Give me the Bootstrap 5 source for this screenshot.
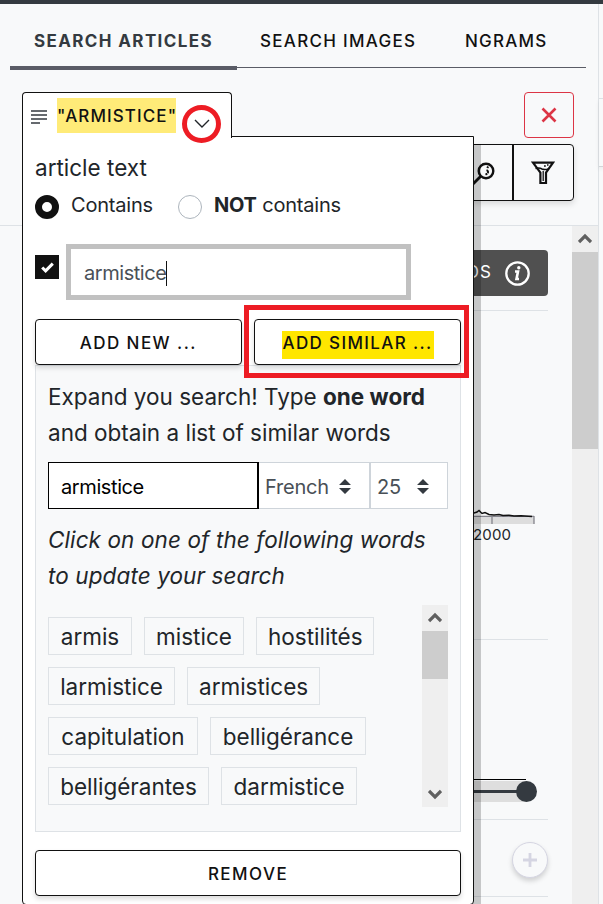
<!DOCTYPE html>
<html lang="en">
<head>
<meta charset="utf-8">
<meta name="viewport" content="width=device-width, initial-scale=1">
<title>Search articles</title>
<link href="https://cdn.jsdelivr.net/npm/bootstrap@5.3.0/dist/css/bootstrap.min.css" rel="stylesheet">
<style>
body{font-family:Inter,"Liberation Sans",sans-serif;background:#f8f9fa;color:#212529;width:603px;height:904px;overflow:hidden}
svg{flex:none}
.app-shell{height:904px;border-top:4px solid #343a40;overflow:hidden}
.side-pane{width:599px;border-right:1px solid #dee2e6;flex:none}
.next-pane{width:4px}
.next-pane .head-a{height:95px;border-bottom:1px solid #dee2e6}
.next-pane .head-b{height:68px;border-bottom:1px solid #d2d5d8;box-shadow:0 2px 4px rgba(0,0,0,.08)}
.caps{font-size:17px;font-weight:500;letter-spacing:1.45px;color:#111;line-height:24px;white-space:nowrap}
.tabs-bar{margin:0 12px 0 10px;height:64px;border-bottom:1px solid #5a5c66}
.tab-item{padding:25px 24px 0;height:66px}
.tab-item.is-on{border-bottom:4px solid #5a5c66;color:#343a40;font-weight:700;width:227px;letter-spacing:1.38px}
.tab-two{width:204px;letter-spacing:1.3px;padding-left:23px}
.tab-three{letter-spacing:1.2px}
.filter-row{height:158px;border-bottom:1px solid #dee2e6}
.btn-close-x{width:50px;height:46px;border:1px solid #dc3545;border-radius:4px;margin:24px 24px 6px auto}
.tool-group{width:122px;height:57px;margin:0 24px 0 auto;border:1px solid #111;border-radius:4px;box-shadow:0 3px 6px rgba(0,0,0,.13)}
.tool-group>div{width:60px}
.tool-group>div:first-child{border-right:2px solid #111;width:61px;padding-left:3px}
.bar-track{width:26px;background:#efefef}
.bar-btn{height:26px;padding-bottom:2px}
.thumb-tall{height:197px;background:#cdcdcd}
.thumb-short{height:48px;background:#cdcdcd}
.content-col{width:548px;height:678px;padding-left:22px}
.blk{border-bottom:1px solid #dee2e6}
.blk-count{height:85px}
.blk-axis{height:329px}
.blk-range{height:180px}
.blk-add{height:77px;padding-top:22px}
.dark-btn{background:#505050;color:#fff;height:46px;width:160px;border-radius:4px;padding-right:17px;gap:12px;font-size:17px;letter-spacing:1px}
.popup{position:absolute;left:22px;top:136px;width:452px;height:769px;border:1px solid #111;border-radius:0 0 4px 4px;background:#fff;padding:12px;box-shadow:7px 8px 0 rgba(0,0,0,.2)}
.tag-tab{position:absolute;left:22px;top:92px;width:210px;height:46px;border:1px solid #111;border-bottom:0;border-radius:4px 4px 0 0;background:#fff;padding-left:8px}
.ic-lines{margin-top:17px}
.ic-chevron{margin:26px 0 0 18px}
.hl-soft{background:#ffeb78;height:35px;line-height:37px;width:119px;margin:5px 0 0 10px;letter-spacing:1.1px}
.ring{position:absolute;left:182px;top:105px;width:39px;height:38px;border:5px solid #ed1c24;border-radius:50%}
.frame-red{position:absolute;left:244px;top:305px;width:225px;height:73px;border:5px solid #ed1c24}
.t24{font-size:22.5px;line-height:36px;letter-spacing:0;white-space:nowrap}
.t21{font-size:20px;line-height:30px;letter-spacing:-.2px;white-space:nowrap}
.field-name{padding-top:1px}
.mode-row{height:58px;padding-top:4px}
.mode-label{margin-left:12px}
.mode-first{width:107px}
.dot{width:24px;height:24px;margin-top:5px;border-radius:50%;border:1px solid #adb5bd;background:#fff;flex:none}
.dot.on{border:7.5px solid #111}
.tick{width:24px;height:24px;background:#111;margin:11px 7px 0 0}
.term-in{width:345px;height:56px;border:5px solid #c1c1c1;background:#fff;padding:2px 0 0 13px;color:#495057;letter-spacing:-.45px}
.caret{width:1px;height:25px;background:#111}
.action-row{gap:12px;margin-top:19px}
.btn-line{height:46px;border:1px solid #111;border-radius:4px;background:#fff;box-shadow:0 3px 5px rgba(0,0,0,.14);padding-top:2px}
.btn-similar{padding-left:27px}
.btn-remove{margin-top:18px}
.hl{background:#ffe600;height:28px;line-height:24px;width:152px;padding-left:1px;margin-top:4px;letter-spacing:1.35px}
.similar{background:#f8f9fa;border:1px solid #dee2e6;height:467px;padding:13px 12px 0}
.inputs-row{margin-top:11px}
.box-in{height:47px;border:1px solid #ced4da;background:#fff;color:#495057;padding:2px 0 0 6px}
.box-in.word{width:211px;border-color:#000;border-right-width:2px;color:#000;padding-left:12px;letter-spacing:-.4px}
.box-lang{width:111px}
.box-lang span{width:73px}
.box-num{width:78px}
.box-num span{width:39px}
.hint{margin-top:13px;letter-spacing:.1px}
.list-scroll{height:202px;margin-top:11px}
.chips{gap:12px;padding-top:12px}
.chip-row{gap:12px}
.chip{height:38px;border:1px solid #dee2e6;line-height:37px;padding:0 11px;text-align:center}
.w-84{width:84px}.w-100x{width:100px}.w-118{width:118px}.w-127{width:127px}.w-133{width:133px}.w-150{width:150px}.w-156{width:156px}.w-161{width:161px}.w-136{width:136px}
.plus{width:36px;height:36px;border:1px solid #d5d5e2;border-radius:50%;box-shadow:0 3px 5px rgba(0,0,0,.16);background:#f8f9fa}
</style>
</head>
<body>
<div class="app-shell d-flex position-relative">
  <div class="side-pane">
    <nav class="tabs-bar d-flex">
      <div class="caps tab-item is-on">SEARCH ARTICLES</div>
      <div class="caps tab-item tab-two">SEARCH IMAGES</div>
      <div class="caps tab-item tab-three">NGRAMS</div>
    </nav>
    <div class="filter-row">
      <div class="d-flex"><div class="btn-close-x d-flex align-items-center justify-content-center">
        <svg width="16" height="16" viewBox="0 0 16 16"><path d="M1.5 1.5l13 13M14.5 1.5l-13 13" stroke="#dc3545" stroke-width="2.6"/></svg></div></div>
      <div class="tool-group d-flex">
        <div class="d-flex align-items-center justify-content-center">
          <svg width="26" height="26" viewBox="0 0 26 26" fill="none" stroke="#111"><circle cx="15" cy="11" r="7.3" stroke-width="2.4"/><path d="M9.5 16.5l-8 8" stroke-width="2.8"/><path d="M15.8 6.8l1.8 1M15.5 10.2q2 .6 1.5 3M14.5 14.6l1.8-1" stroke-width="1.8"/></svg>
        </div>
        <div class="d-flex align-items-center justify-content-center">
          <svg width="24" height="24" viewBox="0 0 24 24" fill="none" stroke="#111" stroke-width="2.2"><path d="M2 1.6h20L15 11.5V22H9.400V11.500z"/><path d="M4.500 7.400q4-1 6.500.6 3 1.200 7-.4" stroke-width="1.500"/><path d="M13 5h1.800M16 4h1.500M12.200 10v10" stroke-width="1.300"/></svg>
        </div>
      </div>
    </div>
    <div class="d-flex justify-content-between">
      <div class="content-col">
        <div class="blk blk-count d-flex justify-content-end">
          <div class="dark-btn d-flex align-items-center justify-content-end mt-4"><span>DS</span>
            <svg width="27" height="27" viewBox="0 0 27 27" fill="none" stroke="#fff"><circle cx="13.5" cy="13.500" r="11.200" stroke-width="2.300"/><path d="M11 11.500h3l-1.500 7.500h2.500" stroke-width="2.600"/><circle cx="14.800" cy="7.800" r="1.700" fill="#fff" stroke="none"/></svg>
          </div>
        </div>
        <div class="blk blk-axis">
          <svg width="526" height="260" viewBox="22 311 526 260" fill="none"><path d="M440 518H534V524H440z" fill="#ddd"/><path d="M440 516.500H534M492 517v7M534 516v8" stroke="#84848c" stroke-width="1.300"/><path d="M470 514l4-1 3-1 2-1.500 3 3 3-1 4 2 5 .5 5-.5 4 1 6-.3 5 .8 7-.2 11 .8" stroke="#111" stroke-width="1.500"/><text x="473" y="540" font-size="15" fill="#212529" textLength="38">2000</text></svg>
        </div>
        <div class="blk blk-range">
          <svg width="526" height="179" viewBox="22 640 526 179"><path d="M440 781H526V802H440z" fill="#dedede"/><path d="M440 779.500h86" stroke="#000"/><path d="M440 791.500h86" stroke="#343a40" stroke-width="3"/><circle cx="526.500" cy="791.500" r="10.500" fill="#343a40"/></svg>
        </div>
        <div class="blk blk-add d-flex justify-content-end">
          <div class="plus d-flex align-items-center justify-content-center"><svg width="16" height="16"><path d="M8 1v14M1 8h14" stroke="#d5d5e2" stroke-width="2.800"/></svg></div>
        </div>
      </div>
      <div class="bar-track">
        <div class="bar-btn d-flex align-items-center justify-content-center"><svg width="14" height="11" viewBox="0 0 14 11"><path d="M1 9l6-6 6 6" fill="none" stroke="#606060" stroke-width="3.200"/></svg></div>
        <div class="thumb-tall"></div>
      </div>
    </div>
  </div>
  <div class="next-pane"><div class="head-a"></div><div class="head-b"></div></div>
</div>

<section class="popup">
  <div class="t24 field-name">article text</div>
  <div class="mode-row d-flex">
    <div class="dot on"></div><div class="t21 mode-label mode-first">Contains</div>
    <div class="dot"></div><div class="t21 mode-label"><b>NOT</b> contains</div>
  </div>
  <div class="d-flex">
    <div class="tick d-flex align-items-center justify-content-center"><svg width="13" height="11" viewBox="0 0 13 11"><path d="M1.200 5.500l3.400 3.400L11.800 1.600" stroke="#fff" stroke-width="3" fill="none"/></svg></div>
    <div class="t21 term-in d-flex align-items-center">armistice<span class="caret"></span></div>
  </div>
  <div class="action-row d-flex">
    <div class="btn-line w-50 caps d-flex align-items-center justify-content-center">ADD NEW ...</div>
    <div class="btn-line btn-similar w-50 caps d-flex align-items-center"><div class="hl">ADD SIMILAR ...</div></div>
  </div>
  <div class="similar">
    <div class="t24">Expand you search! Type <b>one word</b><br>and obtain a list of similar words</div>
    <div class="inputs-row d-flex">
      <div class="t21 box-in word d-flex align-items-center">armistice</div>
      <div class="t21 box-in box-lang d-flex align-items-center border-start-0"><span>French</span><svg width="14" height="18" viewBox="0 0 14 18"><path d="M7 1l6 6H1zM7 16l6-6H1z" fill="#343a40"/></svg></div>
      <div class="t21 box-in box-num d-flex align-items-center"><span>25</span><svg width="14" height="18" viewBox="0 0 14 18"><path d="M7 1l6 6H1zM7 16l6-6H1z" fill="#343a40"/></svg></div>
    </div>
    <div class="t24 fst-italic hint">Click on one of the following words<br>to update your search</div>
    <div class="list-scroll d-flex justify-content-between">
      <div class="chips d-flex flex-column">
        <div class="chip-row d-flex t24"><div class="chip w-84">armis</div><div class="chip w-100x">mistice</div><div class="chip w-118">hostilités</div></div>
        <div class="chip-row d-flex t24"><div class="chip w-127">larmistice</div><div class="chip w-133">armistices</div></div>
        <div class="chip-row d-flex t24"><div class="chip w-150">capitulation</div><div class="chip w-156">belligérance</div></div>
        <div class="chip-row d-flex t24"><div class="chip w-161">belligérantes</div><div class="chip w-136">darmistice</div></div>
      </div>
      <div class="bar-track d-flex flex-column">
        <div class="bar-btn d-flex align-items-center justify-content-center"><svg width="14" height="11" viewBox="0 0 14 11"><path d="M1 9l6-6 6 6" fill="none" stroke="#606060" stroke-width="3.200"/></svg></div>
        <div class="thumb-short"></div>
        <div class="bar-btn pb-0 mt-auto d-flex align-items-center justify-content-center"><svg width="14" height="11" viewBox="0 0 14 11"><path d="M1 2l6 6 6-6" fill="none" stroke="#606060" stroke-width="3.200"/></svg></div>
      </div>
    </div>
  </div>
  <div class="btn-line btn-remove caps d-flex align-items-center justify-content-center">REMOVE</div>
</section>
<div class="tag-tab d-flex">
  <svg class="ic-lines" width="16" height="14"><path d="M0 1h16M0 5h16M0 9h16M0 13h9" stroke="#343a40" stroke-width="1.300"/></svg>
  <div class="caps hl-soft">"ARMISTICE"</div>
  <svg class="ic-chevron" width="16" height="9"><path d="M1 1l7 7 7-7" fill="none" stroke="#212529" stroke-width="1.400"/></svg>
</div>
<div class="ring"></div>
<div class="frame-red"></div>
<script src="https://cdn.jsdelivr.net/npm/bootstrap@5.3.0/dist/js/bootstrap.bundle.min.js"></script>
</body>
</html>
